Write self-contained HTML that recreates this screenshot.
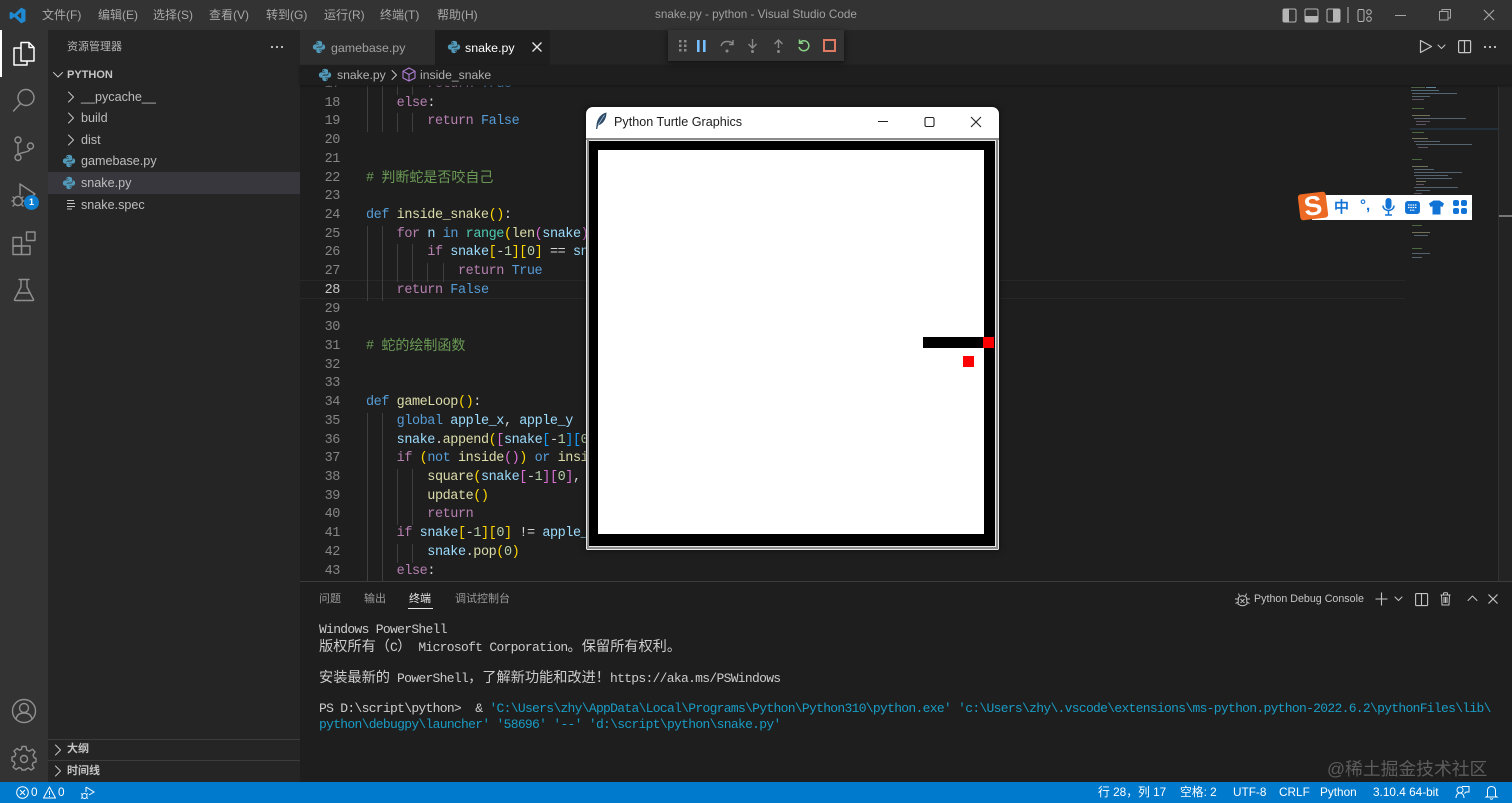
<!DOCTYPE html>
<html lang="zh">
<head>
<meta charset="utf-8">
<title>snake.py - python - Visual Studio Code</title>
<style>
*{box-sizing:border-box}
html,body{margin:0;padding:0;width:1512px;height:803px;overflow:hidden;background:#1e1e1e;font-family:"Liberation Sans","Noto Sans CJK SC",sans-serif;color:#ccc}
.a{position:absolute}
.t{position:absolute;white-space:pre;line-height:16px}
svg{position:absolute;overflow:visible}
.i{fill:none;stroke:#c5c5c5;stroke-width:1;stroke-linecap:round;stroke-linejoin:round}
.ab{fill:none;stroke:#8f8f8f;stroke-width:1.4;stroke-linecap:round;stroke-linejoin:round}
.menu{font-size:12px;color:#a8a8a8;top:7px}
.file{font-size:12.6px;color:#bdbdbd;left:81px}
#code{position:absolute;left:300px;top:85px;width:1110px;height:496px;overflow:hidden}
#inner{position:absolute;left:0;top:-9.1px;width:1110px}
.l{position:relative;height:18.72px;line-height:18.72px;font-family:"Liberation Mono","Noto Sans CJK SC",monospace;font-size:13.5px;letter-spacing:-.44px;white-space:pre;padding-left:66px;color:#d4d4d4}
.l>i{position:absolute;left:0;width:40px;text-align:right;font-style:normal;color:#858585;letter-spacing:-.4px}
.cj{font-size:14px;letter-spacing:0;line-height:0;position:relative;top:1px;font-family:"Noto Sans CJK SC",sans-serif}
.k{color:#b57fb0}.b{color:#569cd6}.f{color:#dcdcaa}.v{color:#9cdcfe}.c{color:#6a9955}.y{color:#ffd700}.m{color:#da70d6}.s{color:#179fff}.n{color:#b5cea8}.h{color:#4ec9b0}
.g{position:absolute;width:1px;background:#3f3f3f}
.term{position:absolute;left:319px;height:16px;font-family:"Liberation Mono","Noto Sans CJK SC",monospace;font-size:13px;letter-spacing:-.7px;line-height:16px;white-space:pre;color:#ccc}
.term b{font-weight:normal;font-size:14.2px;letter-spacing:0;font-family:"Noto Sans CJK SC",sans-serif;line-height:0}
.term u{text-decoration:none;color:#1a9cc4}
.st{position:absolute;top:784px;font-size:11.8px;color:#fff;white-space:pre;line-height:16px}
.mm{position:absolute;height:1px;opacity:.6}
</style>
</head>
<body>
<svg width="0" height="0" style="position:absolute"><defs>
<symbol id="py" viewBox="0 0 16 16"><path fill="#519aba" d="M8 1C5.2 1 5 2.2 5 3v1.4h3.2V5H3.5C2 5 1 6.2 1 8s1 3 2.5 3H5V9.5C5 8.3 6 7.5 7 7.5h3c.9 0 1.5-.7 1.5-1.500V3c0-1-1.300-2-3.500-2zM6.500 2.200a.6.6 0 110 1.200.6.6 0 010-1.200zM12 5v1.500C12 7.700 11 8.500 10 8.500H6.500c-.9 0-1.500.7-1.500 1.500v3c0 1 1.300 2 3 2s3-1.200 3-2v-1.400H7.800V11h4.700c1.500 0 2.500-1.200 2.500-3s-1-3-2.500-3H12zM9.500 12.600a.6.6 0 110 1.200.6.6 0 010-1.200z"/></symbol>
</defs></svg>

<!-- title bar -->
<div class="a" style="left:0;top:0;width:1512px;height:30px;background:#333"></div>
<svg style="left:9px;top:7px" width="17" height="17" viewBox="0 0 17 17"><path fill="#1f8ad2" d="M12.200.6 16.500 2.700V14.300L12.200 16.400 5.300 9.900 2.200 12.300.6 11.400V5.600L2.200 4.700 5.300 7.100zM12.200 5 8.200 8.500 12.200 12z"/></svg>
<span class="t menu" style="left:42px">文件(F)</span>
<span class="t menu" style="left:98px">编辑(E)</span>
<span class="t menu" style="left:153px">选择(S)</span>
<span class="t menu" style="left:209px">查看(V)</span>
<span class="t menu" style="left:266px">转到(G)</span>
<span class="t menu" style="left:324px">运行(R)</span>
<span class="t menu" style="left:380px">终端(T)</span>
<span class="t menu" style="left:437px">帮助(H)</span>
<span class="t" style="left:655px;top:7px;font-size:11.7px;color:#a0a0a0">snake.py - python - Visual Studio Code</span>
<svg style="left:1282px;top:8px" width="100" height="15" viewBox="0 0 100 15">
<rect x="1" y="1" width="13" height="13" rx="1.5" fill="none" stroke="#b5b5b5"/><rect x="1" y="1" width="6" height="13" fill="#b5b5b5"/>
<rect x="23" y="1" width="13" height="13" rx="1.5" fill="none" stroke="#b5b5b5"/><rect x="23" y="8" width="13" height="6" fill="#b5b5b5"/>
<rect x="45" y="1" width="13" height="13" rx="1.5" fill="none" stroke="#b5b5b5"/><rect x="51" y="1" width="7" height="13" fill="#b5b5b5"/>
<rect x="65.500" y="-1" width="1" height="16" fill="#b5b5b5"/>
<rect x="76" y="1.500" width="6" height="12" rx="1.500" fill="none" stroke="#b5b5b5"/><circle cx="87" cy="4" r="2.300" fill="none" stroke="#b5b5b5"/><circle cx="87" cy="11" r="2.300" fill="none" stroke="#b5b5b5"/>
</svg>
<svg style="left:1394px;top:8px" width="110" height="15" viewBox="0 0 110 15" fill="none" stroke="#a5a5a5">
<path d="M1 7.500H12"/>
<rect x="45.500" y="3.500" width="8.500" height="8.500"/><path d="M48 3.500V1.500H56.500V10H54"/>
<path d="M90 2 100 12M100 2 90 12" stroke-width="1.200"/>
</svg>

<!-- activity bar -->
<div class="a" style="left:0;top:30px;width:48px;height:752px;background:#333"></div>
<div class="a" style="left:0;top:30px;width:2px;height:47px;background:#fff"></div>
<svg style="left:12px;top:41px" width="24" height="26" viewBox="0 0 24 26" fill="none" stroke="#fff" stroke-width="1.500" stroke-linejoin="round"><path d="M9 1.500H17L22 6.500V20H9z"/><path d="M17 1.500V6.500H22"/><path d="M9 7H2V24H15V20"/></svg>
<svg style="left:12px;top:88px" width="24" height="24" viewBox="0 0 24 24" class="ab"><circle cx="14" cy="9.500" r="8"/><path d="M8.500 15.500 1.500 23"/></svg>
<svg style="left:13px;top:136px" width="22" height="26" viewBox="0 0 22 26" class="ab"><circle cx="5" cy="4" r="3"/><circle cx="5" cy="21.500" r="3"/><circle cx="17.500" cy="10" r="3"/><path d="M5 7V18.500M17 13C16 17 9 15.500 5.500 18.500"/></svg>
<svg style="left:11px;top:183px" width="26" height="26" viewBox="0 0 26 26" class="ab"><path d="M9 1V12M9 1 24 11 15 17"/><circle cx="7" cy="18" r="4.500"/><path d="M2 14 4 15.500M12 14 10 15.500M1 18H3M11 18H13M2 23 4 21M12 23 10 21"/></svg>
<div class="a" style="left:24px;top:195px;width:15px;height:15px;border-radius:50%;background:#0e7fd0;color:#fff;font-size:9px;text-align:center;line-height:15px;font-weight:bold">1</div>
<svg style="left:12px;top:231px" width="24" height="25" viewBox="0 0 24 25" class="ab"><rect x="1" y="6.500" width="8.500" height="8.500"/><rect x="1" y="15" width="8.500" height="8.500"/><rect x="9.500" y="15" width="8.500" height="8.500"/><rect x="14.500" y="1" width="8.500" height="8.500"/></svg>
<svg style="left:13px;top:278px" width="22" height="24" viewBox="0 0 22 24" class="ab"><path d="M6 1.500H16M8 1.500V9L1.500 21.500Q1 22.500 2.500 22.500H19.500Q21 22.500 20.500 21.500L14 9V1.500M5 15H17"/></svg>
<svg style="left:11px;top:698px" width="26" height="26" viewBox="0 0 26 26" class="ab"><circle cx="13" cy="13" r="11.500"/><circle cx="13" cy="10" r="4.500"/><path d="M5 21C6 16.500 9 15 13 15S20 16.500 21 21"/></svg>
<svg style="left:11px;top:745px" width="26" height="26" viewBox="0 0 26 26" class="ab"><path d="M11 1.500H15L15.700 5 18.500 6.200 21.500 4.200 24 7 22 10 23 12.700 25 13.300V17L22.300 17.600 21.200 20 23 23 20 25 17.500 23 15 24 14.500 25H11L10.500 23.500 8 22.500 5 24.500 2 22 4 19 3 16.500 1 16V12L3.800 11.400 4.800 8.800 3 6 6 3.500 8.500 5.200 10.500 4.300z"/><circle cx="13" cy="14" r="3.500"/></svg>

<!-- sidebar -->
<div class="a" style="left:48px;top:30px;width:252px;height:752px;background:#252526"></div>
<span class="t" style="left:67px;top:39px;font-size:11px;color:#b5b5b5">资源管理器</span>
<svg style="left:270px;top:45px" width="14" height="4"><circle cx="2" cy="2" r="1.100" fill="#ccc"/><circle cx="7" cy="2" r="1.100" fill="#ccc"/><circle cx="12" cy="2" r="1.100" fill="#ccc"/></svg>
<svg style="left:52px;top:71px" width="12" height="8" class="i"><path d="M1.500 1.500 6 6 10.500 1.500"/></svg>
<span class="t" style="left:67px;top:67px;font-size:11px;font-weight:bold;color:#c5c5c5">PYTHON</span>
<div class="a" style="left:48px;top:172px;width:252px;height:22px;background:#37373d"></div>
<svg style="left:67px;top:91px" width="8" height="12" class="i"><path d="M1.500 1 6.500 6 1.500 11"/></svg>
<svg style="left:67px;top:112px" width="8" height="12" class="i"><path d="M1.500 1 6.500 6 1.500 11"/></svg>
<svg style="left:67px;top:134px" width="8" height="12" class="i"><path d="M1.500 1 6.500 6 1.500 11"/></svg>
<span class="t file" style="top:89px">__pycache__</span>
<span class="t file" style="top:110px">build</span>
<span class="t file" style="top:132px">dist</span>
<svg style="left:62px;top:154px" width="14" height="14"><use href="#py"/></svg>
<span class="t file" style="top:153px">gamebase.py</span>
<svg style="left:62px;top:176px" width="14" height="14"><use href="#py"/></svg>
<span class="t file" style="top:175px">snake.py</span>
<svg style="left:66px;top:199px" width="10" height="11" fill="none" stroke="#c5c5c5"><path d="M1 1.500H8M1 4.500H9M1 7.500H9M1 10H6"/></svg>
<span class="t file" style="top:197px">snake.spec</span>
<div class="a" style="left:48px;top:739px;width:252px;height:1px;background:#3c3c3c"></div>
<div class="a" style="left:48px;top:760px;width:252px;height:1px;background:#3c3c3c"></div>
<svg style="left:54px;top:744px" width="8" height="12" class="i"><path d="M1.500 1 6.500 6 1.500 11"/></svg>
<svg style="left:54px;top:765px" width="8" height="12" class="i"><path d="M1.500 1 6.500 6 1.500 11"/></svg>
<span class="t" style="left:67px;top:741px;font-size:11px;font-weight:bold;color:#c5c5c5">大纲</span>
<span class="t" style="left:67px;top:763px;font-size:11px;font-weight:bold;color:#c5c5c5">时间线</span>

<!-- tabs -->
<div class="a" style="left:300px;top:30px;width:1212px;height:35px;background:#252526"></div>
<div class="a" style="left:300px;top:30px;width:135px;height:35px;background:#2d2d2d"></div>
<div class="a" style="left:435px;top:30px;width:115px;height:35px;background:#1e1e1e"></div>
<svg style="left:312px;top:40px" width="14" height="14"><use href="#py"/></svg>
<span class="t" style="left:331px;top:40px;font-size:12.4px;color:#a0a0a0">gamebase.py</span>
<svg style="left:447px;top:40px" width="14" height="14"><use href="#py"/></svg>
<span class="t" style="left:465px;top:40px;font-size:12.4px;color:#fff">snake.py</span>
<svg style="left:532px;top:42px" width="10" height="10" fill="none" stroke="#e8e8e8" stroke-width="1.300"><path d="M.5.500 9.500 9.500M9.500.500 .5 9.500"/></svg>
<svg style="left:1419px;top:39px" width="14" height="15" fill="none" stroke="#c5c5c5" stroke-width="1.200" stroke-linejoin="round"><path d="M1.500 1.500 12.500 7.500 1.500 13.500z"/></svg>
<svg style="left:1437px;top:44px" width="9" height="6" class="i"><path d="M1 1 4.500 4.500 8 1"/></svg>
<svg style="left:1458px;top:40px" width="13" height="13" fill="none" stroke="#c5c5c5" stroke-width="1.200"><rect x=".6" y=".6" width="12" height="12" rx="1"/><path d="M6.500.600V12.600"/></svg>
<svg style="left:1483px;top:45px" width="14" height="4"><circle cx="2" cy="2" r="1.100" fill="#ccc"/><circle cx="7" cy="2" r="1.100" fill="#ccc"/><circle cx="12" cy="2" r="1.100" fill="#ccc"/></svg>

<!-- breadcrumb -->
<div class="a" style="left:300px;top:65px;width:1212px;height:20px;background:#1e1e1e;box-shadow:0 1px 2px #151515;z-index:2"></div>
<svg style="left:318px;top:68px;z-index:3" width="14" height="14"><use href="#py"/></svg>
<span class="t" style="left:337px;top:67px;font-size:12.2px;color:#b0b0b0;z-index:3">snake.py</span>
<svg style="left:391px;top:70px;z-index:3" width="7" height="10" class="i"><path d="M1 .5 5.500 5 1 9.500"/></svg>
<svg style="left:402px;top:67px;z-index:3" width="14" height="15" fill="none" stroke="#b180d7" stroke-width="1.100" stroke-linejoin="round"><path d="M7 1 13 4.200V11L7 14 1 11V4.200zM1 4.200 7 7.500 13 4.200M7 7.500V14"/></svg>
<span class="t" style="left:420px;top:67px;font-size:12.2px;color:#b0b0b0;z-index:3">inside_snake</span>

<!-- editor -->
<div class="a" style="left:300px;top:280px;width:1105px;height:19px;border-top:1px solid #282828;border-bottom:1px solid #282828"></div>
<div class="g" style="left:367px;top:85px;height:47px"></div><div class="g" style="left:382px;top:85px;height:47px"></div>
<div class="g" style="left:397px;top:85px;height:10px"></div><div class="g" style="left:412px;top:85px;height:10px"></div>
<div class="g" style="left:397px;top:113px;height:19px"></div><div class="g" style="left:412px;top:113px;height:19px"></div>
<div class="g" style="left:367px;top:226px;height:75px"></div><div class="g" style="left:382px;top:226px;height:75px"></div>
<div class="g" style="left:397px;top:244px;height:38px"></div><div class="g" style="left:412px;top:244px;height:38px"></div>
<div class="g" style="left:427px;top:263px;height:19px"></div><div class="g" style="left:443px;top:263px;height:19px"></div>
<div class="g" style="left:367px;top:413px;height:168px"></div><div class="g" style="left:382px;top:413px;height:168px"></div>
<div class="g" style="left:397px;top:469px;height:56px"></div><div class="g" style="left:412px;top:469px;height:56px"></div>
<div class="g" style="left:397px;top:544px;height:19px"></div><div class="g" style="left:412px;top:544px;height:19px"></div>
<div id="code"><div id="inner">
<div class="l"><i>17</i>        <span class="k">return</span> <span class="b">True</span></div>
<div class="l"><i>18</i>    <span class="k">else</span>:</div>
<div class="l"><i>19</i>        <span class="k">return</span> <span class="b">False</span></div>
<div class="l"><i>20</i></div>
<div class="l"><i>21</i></div>
<div class="l"><i>22</i><span class="c"># <span class="cj">判断蛇是否咬自己</span></span></div>
<div class="l"><i>23</i></div>
<div class="l"><i>24</i><span class="b">def</span> <span class="f">inside_snake</span><span class="y">()</span>:</div>
<div class="l"><i>25</i>    <span class="k">for</span> <span class="v">n</span> <span class="b">in</span> <span class="h">range</span><span class="y">(</span><span class="f">len</span><span class="m">(</span><span class="v">snake</span><span class="m">)</span><span class="y">)</span>:</div>
<div class="l"><i>26</i>        <span class="k">if</span> <span class="v">snake</span><span class="y">[</span>-<span class="n">1</span><span class="y">]</span><span class="y">[</span><span class="n">0</span><span class="y">]</span> == <span class="v">snake</span></div>
<div class="l"><i>27</i>            <span class="k">return</span> <span class="b">True</span></div>
<div class="l"><i style="color:#c6c6c6">28</i>    <span class="k">return</span> <span class="b">False</span></div>
<div class="l"><i>29</i></div>
<div class="l"><i>30</i></div>
<div class="l"><i>31</i><span class="c"># <span class="cj">蛇的绘制函数</span></span></div>
<div class="l"><i>32</i></div>
<div class="l"><i>33</i></div>
<div class="l"><i>34</i><span class="b">def</span> <span class="f">gameLoop</span><span class="y">()</span>:</div>
<div class="l"><i>35</i>    <span class="b">global</span> <span class="v">apple_x</span>, <span class="v">apple_y</span></div>
<div class="l"><i>36</i>    <span class="v">snake</span>.<span class="f">append</span><span class="y">(</span><span class="m">[</span><span class="v">snake</span><span class="s">[</span>-<span class="n">1</span><span class="s">]</span><span class="s">[</span><span class="n">0</span><span class="s">]</span></div>
<div class="l"><i>37</i>    <span class="k">if</span> <span class="y">(</span><span class="b">not</span> <span class="f">inside</span><span class="m">()</span><span class="y">)</span> <span class="b">or</span> <span class="f">inside_snake</span><span class="y">()</span>:</div>
<div class="l"><i>38</i>        <span class="f">square</span><span class="y">(</span><span class="v">snake</span><span class="m">[</span>-<span class="n">1</span><span class="m">]</span><span class="m">[</span><span class="n">0</span><span class="m">]</span>,</div>
<div class="l"><i>39</i>        <span class="f">update</span><span class="y">()</span></div>
<div class="l"><i>40</i>        <span class="k">return</span></div>
<div class="l"><i>41</i>    <span class="k">if</span> <span class="v">snake</span><span class="y">[</span>-<span class="n">1</span><span class="y">]</span><span class="y">[</span><span class="n">0</span><span class="y">]</span> != <span class="v">apple_x</span></div>
<div class="l"><i>42</i>        <span class="v">snake</span>.<span class="f">pop</span><span class="y">(</span><span class="n">0</span><span class="y">)</span></div>
<div class="l"><i>43</i>    <span class="k">else</span>:</div>
<div class="l"><i>44</i></div>
</div></div>

<!-- minimap -->
<div class="a" style="left:1410px;top:85px;width:90px;height:496px;overflow:hidden">
<div class="mm" style="left:1px;top:2px;width:14px;background:#7a9a6a"></div><div class="mm" style="left:16px;top:2px;width:10px;background:#9cdcfe"></div>
<div class="mm" style="left:1px;top:5px;width:28px;background:#6f9fb5"></div>
<div class="mm" style="left:2px;top:8px;width:45px;background:#7a93a5"></div>
<div class="mm" style="left:2px;top:11px;width:18px;background:#7a93a5"></div>
<div class="mm" style="left:2px;top:14px;width:12px;background:#8a7a95"></div>
<div class="mm" style="left:2px;top:23px;width:12px;background:#6a9955"></div>
<div class="mm" style="left:2px;top:30px;width:18px;background:#a8a880"></div>
<div class="mm" style="left:4px;top:33px;width:52px;background:#7a93a5"></div>
<div class="mm" style="left:6px;top:36px;width:14px;background:#8a7a95"></div>
<div class="mm" style="left:6px;top:39px;width:10px;background:#8a7a95"></div>
<div class="mm" style="left:2px;top:47px;width:12px;background:#6a9955"></div>
<div class="mm" style="left:2px;top:53px;width:16px;background:#a8a880"></div>
<div class="mm" style="left:4px;top:56px;width:26px;background:#7a93a5"></div>
<div class="mm" style="left:6px;top:59px;width:56px;background:#7a93a5"></div>
<div class="mm" style="left:8px;top:62px;width:10px;background:#8a7a95"></div>
<div class="a" style="left:0;top:43px;width:90px;height:2px;background:#24303a"></div>
<div class="mm" style="left:2px;top:74px;width:10px;background:#6a9955"></div>
<div class="mm" style="left:2px;top:81px;width:16px;background:#a8a880"></div>
<div class="mm" style="left:4px;top:84px;width:20px;background:#7a93a5"></div>
<div class="mm" style="left:4px;top:87px;width:48px;background:#7a93a5"></div>
<div class="mm" style="left:4px;top:90px;width:34px;background:#7a93a5"></div>
<div class="mm" style="left:6px;top:93px;width:36px;background:#7a93a5"></div>
<div class="mm" style="left:6px;top:96px;width:10px;background:#a8a880"></div>
<div class="mm" style="left:6px;top:99px;width:8px;background:#8a7a95"></div>
<div class="mm" style="left:4px;top:102px;width:44px;background:#7a93a5"></div>
<div class="mm" style="left:6px;top:105px;width:14px;background:#7a93a5"></div>
<div class="mm" style="left:4px;top:108px;width:8px;background:#8a7a95"></div>
<div class="mm" style="left:6px;top:111px;width:32px;background:#7a93a5"></div>
<div class="mm" style="left:6px;top:114px;width:24px;background:#a8a880"></div>
<div class="mm" style="left:4px;top:120px;width:22px;background:#7a93a5"></div>
<div class="mm" style="left:6px;top:123px;width:20px;background:#7a93a5"></div>
<div class="mm" style="left:8px;top:126px;width:38px;background:#a8a880"></div>
<div class="mm" style="left:8px;top:129px;width:14px;background:#7a93a5"></div>
<div class="mm" style="left:2px;top:140px;width:10px;background:#6a9955"></div>
<div class="mm" style="left:2px;top:147px;width:18px;background:#a8a880"></div>
<div class="mm" style="left:4px;top:150px;width:14px;background:#7a93a5"></div>
<div class="mm" style="left:2px;top:163px;width:10px;background:#6a9955"></div>
<div class="mm" style="left:2px;top:168px;width:18px;background:#7a93a5"></div>
<div class="mm" style="left:2px;top:172px;width:10px;background:#7a93a5"></div>
</div>
<div class="a" style="left:1498px;top:85px;width:14px;height:496px;background:#232323;border-left:1px solid #333"></div>
<div class="a" style="left:1499px;top:215px;width:13px;height:2px;background:#777"></div>

<!-- panel -->
<div class="a" style="left:300px;top:581px;width:1212px;height:201px;background:#1e1e1e;border-top:1px solid #3c3c3c"></div>
<span class="t" style="left:319px;top:591px;font-size:11px;color:#9a9a9a">问题</span>
<span class="t" style="left:364px;top:591px;font-size:11px;color:#9a9a9a">输出</span>
<span class="t" style="left:409px;top:591px;font-size:11px;color:#e7e7e7">终端</span>
<div class="a" style="left:408px;top:608px;width:25px;height:1px;background:#e7e7e7"></div>
<span class="t" style="left:455px;top:591px;font-size:11px;color:#9a9a9a">调试控制台</span>
<svg style="left:1234px;top:591px" width="17" height="17" viewBox="0 0 17 17" fill="none" stroke="#c5c5c5"><path d="M4.500 6.500Q8.500 3 12.500 6.500L13 13Q8.500 16.500 4 13zM5.500 5 4.500 2.500M11.500 5 12.500 2.500M4 8H1M13 8H16M4 11 1.500 12.500M13 11 15.500 12.500M6.500 8 10.500 12M10.500 8 6.500 12"/></svg>
<span class="t" style="left:1254px;top:591px;font-size:10.7px;color:#c5c5c5">Python Debug Console</span>
<svg style="left:1375px;top:592px" width="13" height="14" fill="none" stroke="#c5c5c5" stroke-width="1.100"><path d="M6.500.500V13.500M.5 7H12.500"/></svg>
<svg style="left:1394px;top:596px" width="9" height="6" class="i"><path d="M1 1 4.500 4.500 8 1"/></svg>
<svg style="left:1415px;top:593px" width="13" height="13" fill="none" stroke="#c5c5c5" stroke-width="1.100"><rect x=".6" y=".6" width="12" height="12" rx="1"/><path d="M6.500.600V12.600"/></svg>
<svg style="left:1440px;top:592px" width="11" height="14" fill="none" stroke="#c5c5c5"><path d="M.5 3H10.500M3.500 3V1.500Q3.500 .8 4.200 .8H6.800Q7.500 .8 7.500 1.500V3M1.500 3 2 13H9L9.500 3M4 5V11M5.500 5V11M7 5V11"/></svg>
<svg style="left:1467px;top:595px" width="11" height="7" class="i"><path d="M1 5.500 5.500 1 10 5.500"/></svg>
<svg style="left:1488px;top:594px" width="10" height="10" fill="none" stroke="#c5c5c5" stroke-width="1.200"><path d="M.5.500 9.500 9.500M9.500.500 .5 9.500"/></svg>

<div class="term" style="top:622px">Windows PowerShell</div>
<div class="term" style="top:640px"><b>版权所有（</b>C<b>）</b> Microsoft Corporation<b>。保留所有权利。</b></div>
<div class="term" style="top:671px"><b>安装最新的</b> PowerShell<b>，了解新功能和改进！</b>https://aka.ms/PSWindows</div>
<div class="term" style="top:701px">PS D:\script\python&gt;  &amp; <u>'C:\Users\zhy\AppData\Local\Programs\Python\Python310\python.exe' 'c:\Users\zhy\.vscode\extensions\ms-python.python-2022.6.2\pythonFiles\lib\</u></div>
<div class="term" style="top:717px"><u>python\debugpy\launcher' '58696' '--' 'd:\script\python\snake.py'</u></div>
<span class="t" style="left:1327px;top:759px;font-size:17.8px;line-height:20px;color:#5d5d5d">@稀土掘金技术社区</span>

<!-- debug toolbar -->
<div class="a" style="left:668px;top:30px;width:176px;height:31px;background:#333;box-shadow:0 2px 6px #111;z-index:3"></div>
<svg style="left:679px;top:40px;z-index:4" width="8" height="12" fill="#8a8a8a"><rect x="0" y="0" width="2.500" height="2.500"/><rect x="5" y="0" width="2.500" height="2.500"/><rect x="0" y="4.500" width="2.500" height="2.500"/><rect x="5" y="4.500" width="2.500" height="2.500"/><rect x="0" y="9" width="2.500" height="2.500"/><rect x="5" y="9" width="2.500" height="2.500"/></svg>
<svg style="left:697px;top:40px;z-index:4" width="9" height="12" fill="#75beff"><rect x="0" y="0" width="2.600" height="12"/><rect x="6" y="0" width="2.600" height="12"/></svg>
<svg style="left:720px;top:39px;z-index:4" width="14" height="15" fill="none" stroke="#8a8a8a" stroke-width="1.400"><path d="M1 7Q2.500 2.500 7 2.500T13 5M13 1V5.500H9"/><circle cx="7" cy="12" r="1.500" fill="#8a8a8a" stroke="none"/></svg>
<svg style="left:746px;top:39px;z-index:4" width="13" height="15" fill="none" stroke="#8a8a8a" stroke-width="1.400"><path d="M6.500 0V8M2.500 5 6.500 9 10.500 5"/><circle cx="6.500" cy="12.500" r="1.500" fill="#8a8a8a" stroke="none"/></svg>
<svg style="left:772px;top:39px;z-index:4" width="13" height="15" fill="none" stroke="#8a8a8a" stroke-width="1.400"><path d="M6.500 9V1M2.500 5 6.500 1 10.500 5"/><circle cx="6.500" cy="12.500" r="1.500" fill="#8a8a8a" stroke="none"/></svg>
<svg style="left:797px;top:39px;z-index:4" width="14" height="14" fill="none" stroke="#89d185" stroke-width="1.500"><path d="M3 3.500A5 5 0 1 1 2 8M2.500 .5V4.200H6.200"/></svg>
<svg style="left:823px;top:39px;z-index:4" width="13" height="13"><rect x="1" y="1" width="11" height="11" fill="none" stroke="#e07a62" stroke-width="2"/></svg>

<!-- Turtle window -->
<div class="a" style="left:586px;top:107px;width:413px;height:443px;background:#fff;border-radius:7px 7px 2px 2px;box-shadow:0 0 7px rgba(0,0,0,.6);z-index:5;overflow:hidden">
  <div class="a" style="left:0;top:31px;width:413px;height:412px;background:#e8e8e8;border-top:2px solid #8a8a8a"></div>
  <div class="a" style="left:1px;top:33px;width:411px;height:409px;border-left:2px solid #8a8a8a;border-right:2px solid #8a8a8a;border-bottom:2px solid #8a8a8a"></div>
  <div class="a" style="left:3px;top:34px;width:406px;height:405px;background:#000"></div>
  <div class="a" style="left:12px;top:43px;width:386px;height:384px;background:#fff"></div>
  <div class="a" style="left:337px;top:229.5px;width:61px;height:11px;background:#000"></div>
  <div class="a" style="left:397px;top:229.5px;width:11px;height:11px;background:#f00"></div>
  <div class="a" style="left:377px;top:249px;width:11px;height:11px;background:#f00"></div>
  <svg style="left:9px;top:5px" width="13" height="18" viewBox="0 0 13 18"><path fill="#2c4a66" d="M11.500.5C6 1.500 2 7 1.500 13L1 17 2.200 17 3 13.500C8 12 11.500 7 11.500.5z"/><path fill="none" stroke="#a8c0d4" stroke-width=".8" d="M9.500 3 3 13"/></svg>
  <span class="t" style="left:28px;top:7px;font-size:12.6px;color:#1c1c1c">Python Turtle Graphics</span>
  <svg style="left:292px;top:9px" width="110" height="13" viewBox="0 0 110 13" fill="none" stroke="#222" stroke-width="1.100"><path d="M0 5.500H10"/><rect x="47" y="1.500" width="9" height="9" rx="1.500"/><path d="M93 1 103 11M103 1 93 11"/></svg>
</div>

<!-- Sogou IME -->
<div class="a" style="left:1312px;top:195px;width:160px;height:25px;background:#fff;z-index:6"></div>
<div class="a" style="left:1299px;top:193px;width:28px;height:26px;background:#ec6a23;border-radius:3px;transform:rotate(-7deg);z-index:6;color:#fff;font-size:27px;font-weight:bold;line-height:26px;text-align:center;font-family:'Liberation Sans',sans-serif">S</div>
<span class="t" style="left:1334px;top:199px;font-size:15px;line-height:17px;color:#1273d6;-webkit-text-stroke:.5px #1273d6;z-index:7">中</span>
<span class="t" style="left:1360px;top:197px;font-size:15px;font-weight:bold;line-height:17px;color:#1273d6;z-index:7">°,</span>
<svg style="left:1382px;top:198px;z-index:7" width="13" height="18" viewBox="0 0 13 18"><rect x="3.500" y="0" width="6" height="11" rx="3" fill="#1273d6"/><path d="M1 7.500C1 14 12 14 12 7.500M6.500 12V16.500M3 17H10" fill="none" stroke="#1273d6" stroke-width="1.500"/></svg>
<svg style="left:1405px;top:201px;z-index:7" width="15" height="13" viewBox="0 0 15 13"><rect x=".8" y=".8" width="13.400" height="11.400" rx="2" fill="#1273d6" stroke="#1273d6" stroke-width="1.500"/><path d="M3 4H12M3 6.500H12M5 9.200H10" stroke="#fff" stroke-width="1.200" stroke-dasharray="1.500 .8"/></svg>
<svg style="left:1429px;top:200px;z-index:7" width="15" height="15" viewBox="0 0 15 15"><path fill="#1273d6" d="M4.500.5H10.500L15 3.500 13.500 7 11.500 6.200V14.500H3.500V6.200L1.500 7 0 3.500z"/></svg>
<svg style="left:1453px;top:200px;z-index:7" width="14" height="14" viewBox="0 0 14 14" fill="#1273d6"><rect x="0" y="0" width="6" height="6" rx="2"/><rect x="8" y="0" width="6" height="6" rx="2"/><rect x="0" y="8" width="6" height="6" rx="2"/><rect x="8" y="8" width="6" height="6" rx="2"/></svg>

<!-- status bar -->
<div class="a" style="left:0;top:782px;width:1512px;height:21px;background:#007acc"></div>
<svg style="left:16px;top:786px" width="13" height="13" fill="none" stroke="#fff"><circle cx="6.500" cy="6.500" r="5.800"/><path d="M4 4 9 9M9 4 4 9"/></svg>
<span class="st" style="left:31px">0</span>
<svg style="left:43px;top:786px" width="13" height="13" fill="none" stroke="#fff" stroke-linejoin="round"><path d="M6.500 1 12.500 12H.5zM6.500 5V9M6.500 10V11"/></svg>
<span class="st" style="left:58px">0</span>
<svg style="left:80px;top:786px" width="15" height="14" fill="none" stroke="#fff"><path d="M6 1V6M6 1 14 6 9 9"/><circle cx="4.500" cy="10" r="2.500"/><path d="M1 7.500 2.500 8.500M8 7.500 6.500 8.500M1 12.500 2.500 11.500M8 12.500 6.500 11.500"/></svg>
<span class="st" style="left:1098px">行 28，列 17</span>
<span class="st" style="left:1180px">空格: 2</span>
<span class="st" style="left:1233px">UTF-8</span>
<span class="st" style="left:1279px">CRLF</span>
<span class="st" style="left:1320px">Python</span>
<span class="st" style="left:1373px">3.10.4 64-bit</span>
<svg style="left:1455px;top:785px" width="15" height="15" fill="none" stroke="#fff"><circle cx="5" cy="5" r="3"/><path d="M1 13C1 9.500 3 8 5 8S9 9.500 9 13M7 1.500H14V7H11L9.500 8.500"/></svg>
<svg style="left:1485px;top:785px" width="13" height="15" fill="none" stroke="#fff"><path d="M2.500 11V6Q2.500 1.500 6.500 1.500T10.500 6V11L12 12H1zM5 13.500Q6.500 15 8 13.500"/></svg>
</body>
</html>
